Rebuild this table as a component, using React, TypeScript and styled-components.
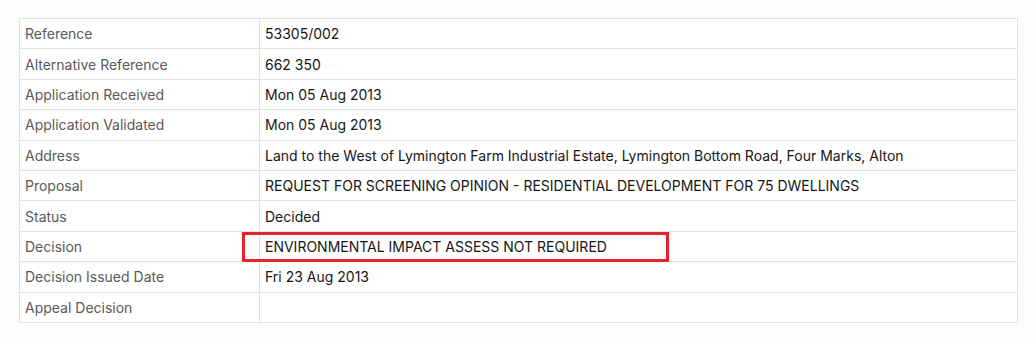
import React from 'react';
import styled, { createGlobalStyle } from 'styled-components';

const GlobalStyle = createGlobalStyle`
	html, body {
		margin: 0;
		background: #fcfcfc;
	}
	body {
		font-family: "Inter", "Liberation Sans", sans-serif;
		font-size: 14px;
	}
`;

const Page = styled.div`
	padding: 18px 18px 0 19px;
`;

const Table = styled.table`
	width: 999px;
	border-collapse: collapse;
	background: #fff;
	table-layout: fixed;
`;

const Row = styled.tr`
	height: 30.4px;
`;

const Label = styled.th`
	width: 229px;
	padding: 0 5px;
	border: 1px solid #e2e2e2;
	text-align: left;
	font-weight: 400;
	color: #5a5a5a;
`;

const Value = styled.td`
	position: relative;
	padding: 0 5px;
	border: 1px solid #e2e2e2;
	color: #161616;
`;

const Highlight = styled.span`
	position: absolute;
	left: -18px;
	top: 0;
	width: 427px;
	height: 30px;
	box-sizing: border-box;
	border: 3px solid #e8202a;
	pointer-events: none;
`;

const rows: { label: string; value: string; marked?: boolean }[] = [
	{ label: 'Reference', value: '53305/002' },
	{ label: 'Alternative Reference', value: '662 350' },
	{ label: 'Application Received', value: 'Mon 05 Aug 2013' },
	{ label: 'Application Validated', value: 'Mon 05 Aug 2013' },
	{ label: 'Address', value: 'Land to the West of Lymington Farm Industrial Estate, Lymington Bottom Road, Four Marks, Alton' },
	{ label: 'Proposal', value: 'REQUEST FOR SCREENING OPINION - RESIDENTIAL DEVELOPMENT FOR 75 DWELLINGS' },
	{ label: 'Status', value: 'Decided' },
	{ label: 'Decision', value: 'ENVIRONMENTAL IMPACT ASSESS NOT REQUIRED', marked: true },
	{ label: 'Decision Issued Date', value: 'Fri 23 Aug 2013' },
	{ label: 'Appeal Decision', value: '' },
];

export default function App() {
	return (
		<>
			<GlobalStyle />
			<Page>
				<Table>
					<tbody>
						{rows.map((r) => (
							<Row key={r.label}>
								<Label scope="row">{r.label}</Label>
								<Value>
									{r.value}
									{r.marked && <Highlight />}
								</Value>
							</Row>
						))}
					</tbody>
				</Table>
			</Page>
		</>
	);
}
